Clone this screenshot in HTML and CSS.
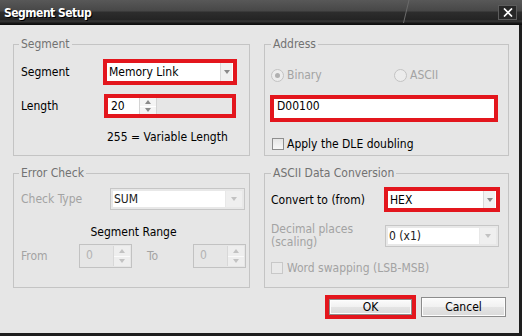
FILE: index.html
```html
<!DOCTYPE html>
<html lang="en">
<head>
<meta charset="utf-8">
<title>Segment Setup</title>
<link rel="stylesheet" href="styles.css">
</head>
<body>
<div class="window">
  <div class="titlebar">
    <span class="title">Segment Setup</span>
    <svg class="tab-edge" width="10" height="25" viewBox="0 0 10 25"><line x1="8" y1="0" x2="2.5" y2="23" stroke="#6b6b6b" stroke-width="1"/></svg>
    <span class="close"><svg width="10" height="9" viewBox="0 0 10 9"><path d="M1 0.5 L9 8.5 M9 0.5 L1 8.5" stroke="#fff" stroke-width="1.7" fill="none"/></svg></span>
  </div>
  <div class="client">
    <div class="groups">
      <fieldset class="group group-left">
        <legend>Segment</legend>
        <div class="row seg-row1">
          <span class="lbl lbl-seg">Segment</span>
          <span class="hl hl-seg">
            <span class="combo">
              <span class="combo-text">Memory Link</span>
              <span class="combo-btn"><i class="tri"></i></span>
            </span>
          </span>
        </div>
        <div class="row seg-row2">
          <span class="lbl lbl-len">Length</span>
          <span class="hl hl-len">
            <span class="spin-edit">20</span>
            <span class="spin-btns"><span class="sb"><i class="tri-up"></i></span><span class="sb"><i class="tri"></i></span></span>
          </span>
        </div>
        <div class="note">255 = Variable Length</div>
      </fieldset>

      <fieldset class="group group-right">
        <legend>Address</legend>
        <div class="row radio-row">
          <span class="radio-item first"><span class="radio checked"></span><span class="dis">Binary</span></span>
          <span class="radio-item"><span class="radio"></span><span class="dis">ASCII</span></span>
        </div>
        <div class="hl hl-addr"><span class="field">D00100</span></div>
        <div class="row check-row">
          <span class="check"></span><span>Apply the DLE doubling</span>
        </div>
      </fieldset>

      <fieldset class="group group-left">
        <legend>Error Check</legend>
        <div class="row ct-row">
          <span class="lbl lbl-ct dis">Check Type</span>
          <span class="dcombo dcombo-ct">
            <span class="dcombo-text">SUM</span>
            <span class="dcombo-btn"><i class="tri light"></i></span>
          </span>
        </div>
        <div class="range-title">Segment Range</div>
        <div class="row from-row">
          <span class="lbl lbl-from dis">From</span>
          <span class="dspin"><span class="dspin-text">0</span><span class="dspin-btns"><span class="dsb"><i class="tri-up light"></i></span><span class="dsb"><i class="tri light"></i></span></span></span>
          <span class="lbl lbl-to dis">To</span>
          <span class="dspin"><span class="dspin-text">0</span><span class="dspin-btns"><span class="dsb"><i class="tri-up light"></i></span><span class="dsb"><i class="tri light"></i></span></span></span>
        </div>
      </fieldset>

      <fieldset class="group group-right">
        <legend>ASCII Data Conversion</legend>
        <div class="row conv-row">
          <span class="lbl lbl-conv">Convert to (from)</span>
          <span class="hl hl-conv">
            <span class="combo">
              <span class="combo-text">HEX</span>
              <span class="combo-btn"><i class="tri"></i></span>
            </span>
          </span>
        </div>
        <div class="row dec-row">
          <span class="lbl lbl-dec dis">Decimal places<br>(scaling)</span>
          <span class="dcombo dcombo-dec">
            <span class="dcombo-text dis">0 (x1)</span>
            <span class="dcombo-btn"><i class="tri light"></i></span>
          </span>
        </div>
        <div class="row ws-row">
          <span class="check disabled"></span><span class="dis">Word swapping (LSB-MSB)</span>
        </div>
      </fieldset>
    </div>

    <div class="buttons">
      <span class="hl hl-ok"><span class="btn btn-ok">OK</span></span>
      <span class="btn btn-cancel">Cancel</span>
    </div>
  </div>
</div>
</body>
</html>
```

FILE: styles.css
```css
* { box-sizing: border-box; }
html, body { margin: 0; padding: 0; }
body {
  width: 522px;
  height: 336px;
  overflow: hidden;
  background: #1c1c1c;
  font-family: "DejaVu Sans Condensed", "DejaVu Sans", sans-serif;
  font-stretch: condensed;
  font-size: 12px;
  line-height: 14px;
  color: #000;
}
.window {
  width: 522px;
  height: 336px;
  display: flex;
  flex-direction: column;
  background: #1e1e1e;
}
.titlebar {
  position: relative;
  flex: none;
  height: 25px;
  display: flex;
  align-items: center;
  justify-content: space-between;
  padding: 0 4px 0 4px;
  background: linear-gradient(to bottom, #585858 0, #474747 11px, #2d2d2d 12px, #242424 20px, #3b3b3b 21px, #2a2a2a 22px, #0e0e0e 24px, #0e0e0e 25px);
}
.title {
  color: #fff;
  font-weight: bold;
  letter-spacing: -0.5px;
  text-shadow: 1px 1px 0 #000;
  margin-top: 1px;
}
.tab-edge { position: absolute; left: 401px; top: 0; }
.close {
  width: 19px;
  height: 15px;
  margin-right: 1px;
  display: flex;
  align-items: center;
  justify-content: center;
  background: #272727;
  border: 1px solid #5c5c5c;
}
.client {
  flex: 1;
  margin: 0 3px 3px 0;
  padding: 12px 0 0 13px;
  background: #e6e6e6;
}
.groups {
  display: grid;
  grid-template-columns: 237px 245px;
  grid-template-rows: 119px 122px;
  column-gap: 14px;
  row-gap: 10px;
}
.group {
  margin: 0;
  min-width: 0;
  border: 1px solid #c4c4c4;
  padding: 0 3px 0 6px;
}
legend {
  padding: 0 2px;
  line-height: 14px;
  color: #727272;
}
.group-left { padding-left: 7px; }
.group-left legend { margin-left: -2px; }
.group-right legend { margin-left: 0; }

.row { display: flex; align-items: center; }
.lbl { flex: none; }
.dis { color: #a3a3a3; }

.hl { border: 4px solid #e3161d; display: flex; flex: none; }

/* combo (enabled) */
.combo { flex: 1; display: flex; background: #fff; }
.combo-text { flex: 1; padding-left: 2px; line-height: 18px; }
.combo-btn {
  width: 12px;
  flex: none;
  display: flex;
  align-items: center;
  justify-content: center;
  background: #f1f1f1;
  border-left: 1px solid #d9d9d9;
  margin-right: 1px;
}
.tri {
  width: 0; height: 0;
  border-left: 3px solid transparent;
  border-right: 3px solid transparent;
  border-top: 4px solid #8a8a8a;
}
.tri-up {
  width: 0; height: 0;
  border-left: 3px solid transparent;
  border-right: 3px solid transparent;
  border-bottom: 4px solid #8a8a8a;
}
.tri.light { border-top-color: #c2c2c2; }
.tri-up.light { border-bottom-color: #c2c2c2; }

/* Segment group */
.seg-row1 { margin-top: 8px; height: 26px; }
.lbl-seg { width: 82px; }
.hl-seg { width: 134px; height: 26px; }
.seg-row2 { margin-top: 9px; height: 24px; }
.lbl-len { width: 83px; }
.hl-len { width: 132px; height: 24px; }
.spin-edit {
  width: 31px;
  background: #fff;
  padding-left: 3px;
  line-height: 16px;
}
.spin-btns {
  width: 18px;
  display: flex;
  flex-direction: column;
  background: #f4f4f4;
  border-left: 1px solid #d4d4d4;
  border-right: 1px solid #d4d4d4;
}
.sb { flex: 1; display: flex; align-items: center; justify-content: center; }
.sb + .sb { border-top: 1px solid #fff; }
.note { margin: 12px 0 0 86px; }

/* Address group */
.radio-row { margin-top: 17px; height: 14px; }
.radio-item { display: flex; align-items: center; }
.radio-item.first { width: 123px; }
.radio {
  width: 13px;
  height: 13px;
  border-radius: 50%;
  border: 1px solid #c3c3c3;
  background: #ececec;
  margin-right: 3px;
  display: flex;
  align-items: center;
  justify-content: center;
}
.radio.checked::after {
  content: "";
  width: 5px;
  height: 5px;
  border-radius: 50%;
  background: #b0b0b0;
}
.hl-addr { margin: 13px 0 0 -1px; width: 228px; height: 27px; }
.field { flex: 1; background: #fff; padding: 0 3px; line-height: 14px; }
.check-row { margin-top: 15px; height: 14px; }
.check {
  width: 12px;
  height: 12px;
  flex: none;
  border: 1px solid #8e8e8e;
  background: linear-gradient(#e6e6e6, #f8f8f8);
  margin: 0 3px 0 1px;
}
.check.disabled { border-color: #c8c8c8; background: #e9e9e9; margin: 0 4px 0 0; }

/* Error check group */
.ct-row { margin-top: 8px; height: 22px; }
.lbl-ct { width: 89px; }
.dcombo {
  flex: none;
  display: flex;
  border: 1px solid #c6c6c6;
  background: #e8e8e8;
  padding: 2px;
}
.dcombo-ct { width: 135px; height: 22px; }
.dcombo-text { flex: 1; background: #fff; padding-left: 1px; line-height: 16px; color: #202020; }
.dcombo-btn {
  width: 16px;
  flex: none;
  display: flex;
  align-items: center;
  justify-content: center;
  background: #efefef;
  margin-left: 1px;
}
.range-title { margin-top: 15px; text-align: center; }
.from-row { margin-top: 5px; height: 24px; }
.lbl-from { width: 58px; }
.lbl-to { width: 46px; margin-left: 15px; }
.dspin {
  flex: none;
  width: 53px;
  height: 24px;
  display: flex;
  border: 1px solid #c2c2c2;
  background: #e6e6e6;
  padding: 1px;
}
.dspin-text { flex: 1; color: #b3b3b3; padding-left: 5px; line-height: 18px; }
.dspin-btns {
  width: 17px;
  display: flex;
  flex-direction: column;
  border-left: 1px solid #d8d8d8;
}
.dsb { flex: 1; display: flex; align-items: center; justify-content: center; background: #eeeeee; }
.dsb + .dsb { border-top: 1px solid #fafafa; }

/* ASCII group */
.conv-row { margin-top: 7px; height: 25px; }
.lbl-conv { width: 113px; }
.hl-conv { width: 116px; height: 25px; }
.dec-row { margin-top: 13px; height: 22px; align-items: flex-start; }
.lbl-dec { width: 114px; margin-top: -2px; line-height: 13px; }
.dcombo-dec { width: 114px; height: 22px; }
.ws-row { margin-top: 14px; height: 14px; }

/* Buttons */
.buttons {
  display: flex;
  justify-content: flex-end;
  align-items: center;
  gap: 5px;
  margin-top: 7px;
  padding-right: 13px;
  height: 24px;
}
.hl-ok { width: 91px; height: 24px; }
.btn {
  display: flex;
  align-items: center;
  justify-content: center;
  border: 1px solid #8c8c8c;
  background: linear-gradient(to bottom, #fbfbfb 0, #f1f1f1 50%, #e4e4e4 51%, #dadada 100%);
  box-shadow: inset 0 0 0 1px #fdfdfd;
}
.btn-ok { flex: 1; }
.btn-cancel { width: 85px; height: 20px; }
```
